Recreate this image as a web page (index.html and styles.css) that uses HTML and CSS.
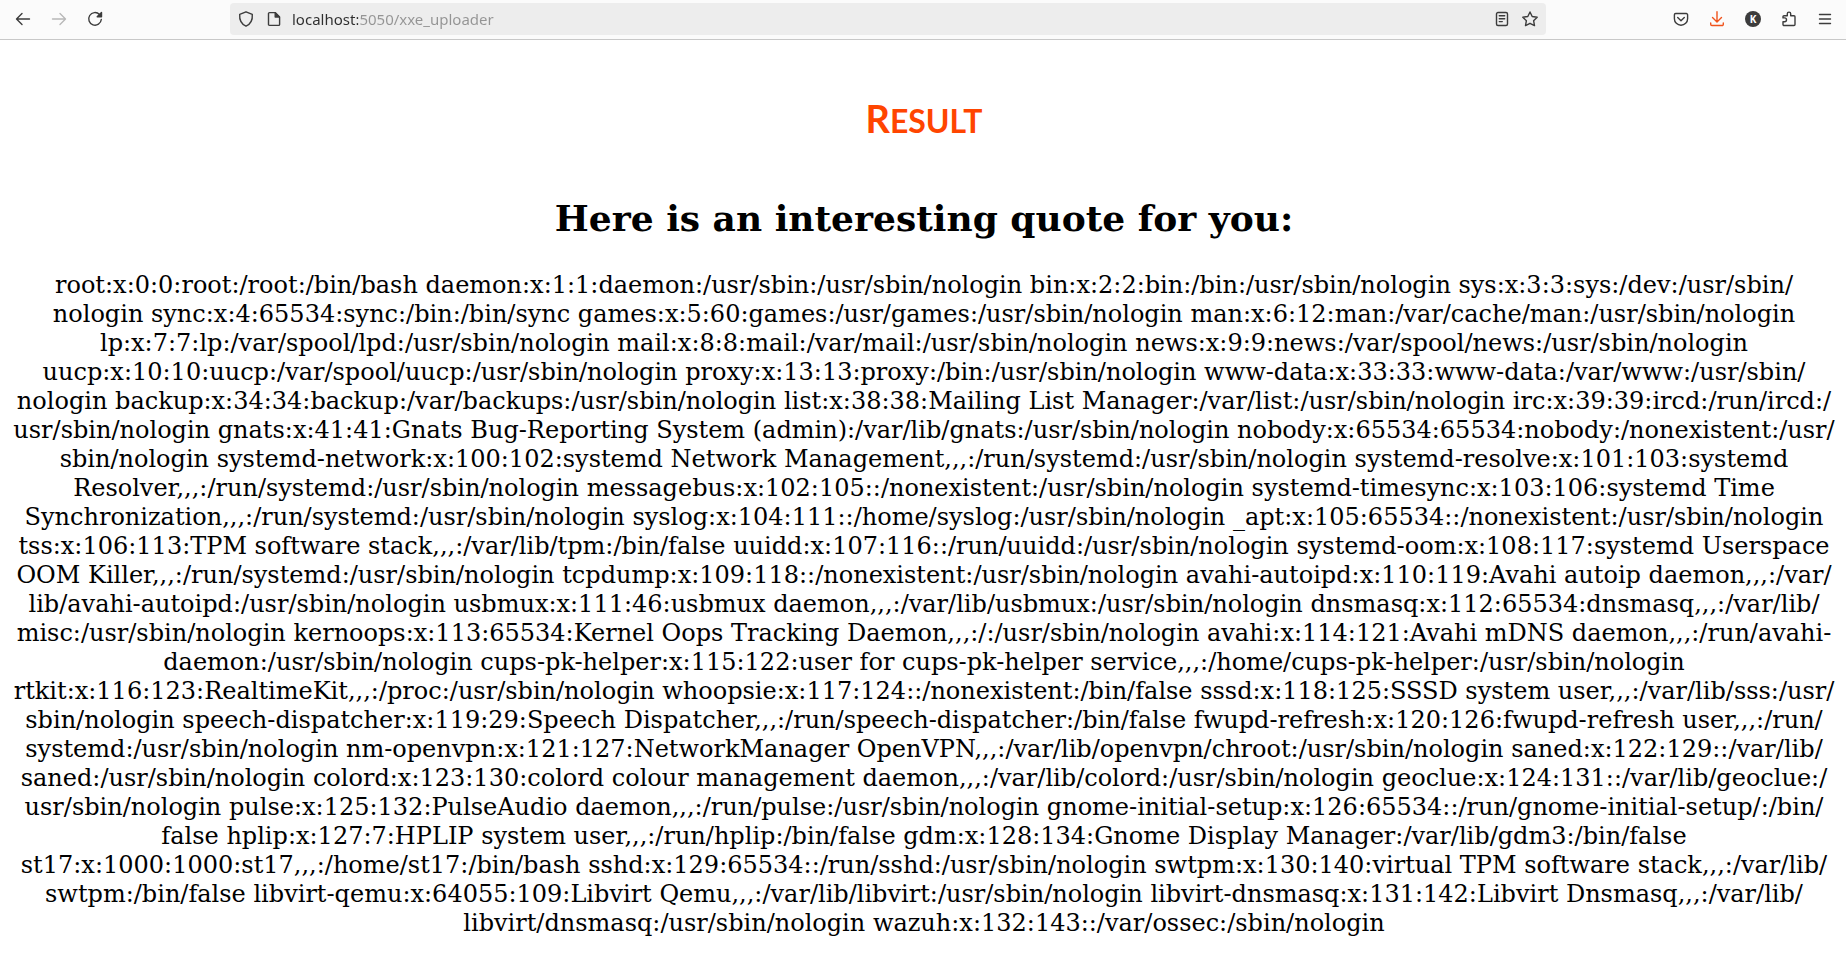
FILE: index.html
```html
<!DOCTYPE html>
<html lang="en">
<head>
<meta charset="utf-8">
<title>Result</title>
<link rel="stylesheet" href="styles.css">
</head>
<body>
<header class="toolbar">
  <nav class="nav" aria-label="History">
    <button class="tool" type="button" aria-label="Back"><svg viewBox="0 0 16 16"><path d="M14.500 8H1.700M7 2.500 1.500 8 7 13.500"/></svg></button>
    <button class="tool" type="button" aria-label="Forward" disabled><svg viewBox="0 0 16 16"><path d="M1.500 8h12.800M9 2.500 14.500 8 9 13.500"/></svg></button>
    <button class="tool" type="button" aria-label="Reload"><svg viewBox="0 0 16 16"><path d="M12.500 3.400A6.300 6.300 0 1 0 14.300 8.500"/><path class="solid" d="M14.500 1.500v4.300h-4.300z"/></svg></button>
  </nav>
  <div class="address">
    <button class="tool" type="button" aria-label="Tracking protection"><svg viewBox="0 0 16 16"><path d="M8 .8 14.300 3.300c.4 5.200-1.800 9.900-6.300 11.900C3.500 13.200 1.300 8.500 1.700 3.300z"/></svg></button>
    <button class="tool" type="button" aria-label="Site information"><svg viewBox="0 0 16 16"><path d="M3.500 1.600H9.200L13.600 6v7.400a1 1 0 0 1-1 1H3.500a1 1 0 0 1-1-1V2.600a1 1 0 0 1 1-1z"/><path class="solid" d="M9.200 1.900V6h4.100z"/></svg></button>
    <input class="url" type="text" aria-label="Address" value="localhost:5050/xxe_uploader">
    <button class="tool" type="button" aria-label="Reader view"><svg viewBox="0 0 16 16"><rect x="2.500" y="1.500" width="11" height="13" rx="1.500"/><path d="M5.300 4.800h5.400M5.300 7.700h5.400M5.300 10.600h3"/></svg></button>
    <button class="tool" type="button" aria-label="Bookmark"><svg viewBox="0 0 16 16"><path d="m8 1 2.200 4.500 5 .7-3.600 3.500.9 4.900L8 12.300l-4.500 2.300.9-4.900L.8 6.200l5-.7z"/></svg></button>
  </div>
  <div class="actions">
    <button class="tool" type="button" aria-label="Save to Pocket"><svg viewBox="0 0 16 16"><path d="M2.700 2.500h10.600a1.300 1.300 0 0 1 1.300 1.300V7.700a6.600 6.600 0 0 1-13.200 0V3.800A1.300 1.300 0 0 1 2.700 2.500z"/><path d="M4.700 6.500 8 9.700l3.300-3.200"/></svg></button>
    <button class="tool alert" type="button" aria-label="Downloads"><svg viewBox="0 0 16 16"><path d="M8 .8v10M3.500 6.500 8 11 12.500 6.500M1.700 12v1.300a1.200 1.200 0 0 0 1.200 1.200h10.200a1.200 1.200 0 0 0 1.200-1.200V12"/></svg></button>
    <button class="tool" type="button" aria-label="Account"><span class="avatar">K</span></button>
    <button class="tool" type="button" aria-label="Extensions"><svg viewBox="0 0 16 16"><path d="M2 10.700h1.600a1.900 1.900 0 0 0 0-3.800H2V5.700a1 1 0 0 1 1-1h3.300V2.800a1.700 1.700 0 0 1 3.400 0v1.900H13a1 1 0 0 1 1 1v7.800a1 1 0 0 1-1 1H3a1 1 0 0 1-1-1z"/></svg></button>
    <button class="tool" type="button" aria-label="Menu"><svg viewBox="0 0 16 16"><path d="M2.500 3.500h11M2.500 8h11M2.500 12.500h11"/></svg></button>
  </div>
</header>
<main class="page">
  <h1 class="title">Result</h1>
  <h2 class="subtitle">Here is an interesting quote for you:</h2>
  <p class="quote">root:x:0:0:root:/root:/bin/bash daemon:x:1:1:daemon:/usr/sbin:/usr/sbin/nologin bin:x:2:2:bin:/bin:/usr/sbin/nologin sys:x:3:3:sys:/dev:/usr/sbin/<wbr>nologin
sync:x:4:65534:sync:/bin:/bin/sync games:x:5:60:games:/usr/games:/usr/sbin/nologin man:x:6:12:man:/var/cache/man:/usr/sbin/nologin
lp:x:7:7:lp:/var/spool/lpd:/usr/sbin/nologin mail:x:8:8:mail:/var/mail:/usr/sbin/nologin news:x:9:9:news:/var/spool/news:/usr/sbin/nologin
uucp:x:10:10:uucp:/var/spool/uucp:/usr/sbin/nologin proxy:x:13:13:proxy:/bin:/usr/sbin/nologin www-data:x:33:33:www-data:/var/www:/usr/sbin/<wbr>nologin
backup:x:34:34:backup:/var/backups:/usr/sbin/nologin list:x:38:38:Mailing List Manager:/var/list:/usr/sbin/nologin irc:x:39:39:ircd:/run/ircd:/<wbr>usr/sbin/nologin
gnats:x:41:41:Gnats Bug-Reporting System (admin):/var/lib/gnats:/usr/sbin/nologin nobody:x:65534:65534:nobody:/nonexistent:/usr/<wbr>sbin/nologin
systemd-network:x:100:102:systemd Network Management,,,:/run/systemd:/usr/sbin/nologin systemd-resolve:x:101:103:systemd
Resolver,,,:/run/systemd:/usr/sbin/nologin messagebus:x:102:105::/nonexistent:/usr/sbin/nologin systemd-timesync:x:103:106:systemd Time
Synchronization,,,:/run/systemd:/usr/sbin/nologin syslog:x:104:111::/home/syslog:/usr/sbin/nologin _apt:x:105:65534::/nonexistent:/usr/sbin/nologin
tss:x:106:113:TPM software stack,,,:/var/lib/tpm:/bin/false uuidd:x:107:116::/run/uuidd:/usr/sbin/nologin systemd-oom:x:108:117:systemd Userspace
OOM Killer,,,:/run/systemd:/usr/sbin/nologin tcpdump:x:109:118::/nonexistent:/usr/sbin/nologin avahi-autoipd:x:110:119:Avahi autoip daemon,,,:/var/<wbr>lib/avahi-autoipd:/usr/sbin/nologin
usbmux:x:111:46:usbmux daemon,,,:/var/lib/usbmux:/usr/sbin/nologin dnsmasq:x:112:65534:dnsmasq,,,:/var/lib/<wbr>misc:/usr/sbin/nologin
kernoops:x:113:65534:Kernel Oops Tracking Daemon,,,:/:/usr/sbin/nologin avahi:x:114:121:Avahi mDNS daemon,,,:/run/avahi-<wbr>daemon:/usr/sbin/nologin
cups-pk-helper:x:115:122:user for cups-pk-helper service,,,:/home/cups-pk-helper:/usr/sbin/nologin
rtkit:x:116:123:RealtimeKit,,,:/proc:/usr/sbin/nologin whoopsie:x:117:124::/nonexistent:/bin/false sssd:x:118:125:SSSD system user,,,:/var/lib/sss:/usr/<wbr>sbin/nologin
speech-dispatcher:x:119:29:Speech Dispatcher,,,:/run/speech-dispatcher:/bin/false fwupd-refresh:x:120:126:fwupd-refresh user,,,:/run/<wbr>systemd:/usr/sbin/nologin
nm-openvpn:x:121:127:NetworkManager OpenVPN,,,:/var/lib/openvpn/chroot:/usr/sbin/nologin saned:x:122:129::/var/lib/<wbr>saned:/usr/sbin/nologin
colord:x:123:130:colord colour management daemon,,,:/var/lib/colord:/usr/sbin/nologin geoclue:x:124:131::/var/lib/geoclue:/<wbr>usr/sbin/nologin
pulse:x:125:132:PulseAudio daemon,,,:/run/pulse:/usr/sbin/nologin gnome-initial-setup:x:126:65534::/run/gnome-initial-setup/:/bin/<wbr>false
hplip:x:127:7:HPLIP system user,,,:/run/hplip:/bin/false gdm:x:128:134:Gnome Display Manager:/var/lib/gdm3:/bin/false
st17:x:1000:1000:st17,,,:/home/st17:/bin/bash sshd:x:129:65534::/run/sshd:/usr/sbin/nologin swtpm:x:130:140:virtual TPM software stack,,,:/var/lib/<wbr>swtpm:/bin/false
libvirt-qemu:x:64055:109:Libvirt Qemu,,,:/var/lib/libvirt:/usr/sbin/nologin libvirt-dnsmasq:x:131:142:Libvirt Dnsmasq,,,:/var/lib/<wbr>libvirt/dnsmasq:/usr/sbin/nologin
wazuh:x:132:143::/var/ossec:/sbin/nologin</p>
</main>
</body>
</html>
```
FILE: styles.css
```css
* { box-sizing: border-box; }
body {
  margin: 0;
  background: #fff;
  color: #000;
  font-family: "DejaVu Serif", serif;
}
.toolbar {
  display: flex;
  align-items: center;
  height: 40px;
  padding: 0 10px 1px 12px;
  background: #fbfbfb;
  border-bottom: 1px solid #c8c8c8;
  font-family: "Noto Sans", sans-serif;
}
.nav { display: flex; flex: 0 0 218px; gap: 14px; }
.actions { display: flex; flex: 0 0 290px; gap: 14px; justify-content: flex-end; }
.tool {
  display: flex;
  align-items: center;
  justify-content: center;
  width: 22px;
  height: 22px;
  padding: 0;
  border: 0;
  background: none;
  color: #3c3c3c;
}
.tool:disabled { color: #b8b8b8; }
.alert { color: #f0531c; }
.tool svg {
  width: 16px;
  height: 16px;
  fill: none;
  stroke: currentColor;
  stroke-width: 1.4;
  stroke-linecap: round;
  stroke-linejoin: round;
}
.tool .solid { fill: currentColor; }
.address {
  display: flex;
  flex: 1;
  align-items: center;
  gap: 6px;
  min-width: 0;
  height: 32px;
  padding: 0 5px;
  border-radius: 4px;
  background: #ededed;
}
.url {
  flex: 1;
  min-width: 0;
  padding: 0 0 0 1px;
  border: 0;
  outline: 0;
  background: linear-gradient(to right, #2e2e2e 67px, #949494 67px);
  -webkit-background-clip: text;
  background-clip: text;
  color: transparent;
  font: 15px/24px "Noto Sans", sans-serif;
}
.avatar {
  width: 16px;
  height: 16px;
  border-radius: 50%;
  background: #3c3c3c;
  color: #fff;
  font: bold 10px/16px "Noto Sans", sans-serif;
}
.page { padding: 40px 9px 40px 11px; text-align: center; }
.title {
  margin: 0;
  color: #ff4500;
  font: bold 32px/76px Lato, sans-serif;
  text-transform: uppercase;
}
.title::first-letter { font-size: 38px; }
.subtitle { margin: 38px 0 32px; font-size: 36px; line-height: 42px; }
.quote { margin: 0; font-size: 24px; line-height: 29px; }
```
